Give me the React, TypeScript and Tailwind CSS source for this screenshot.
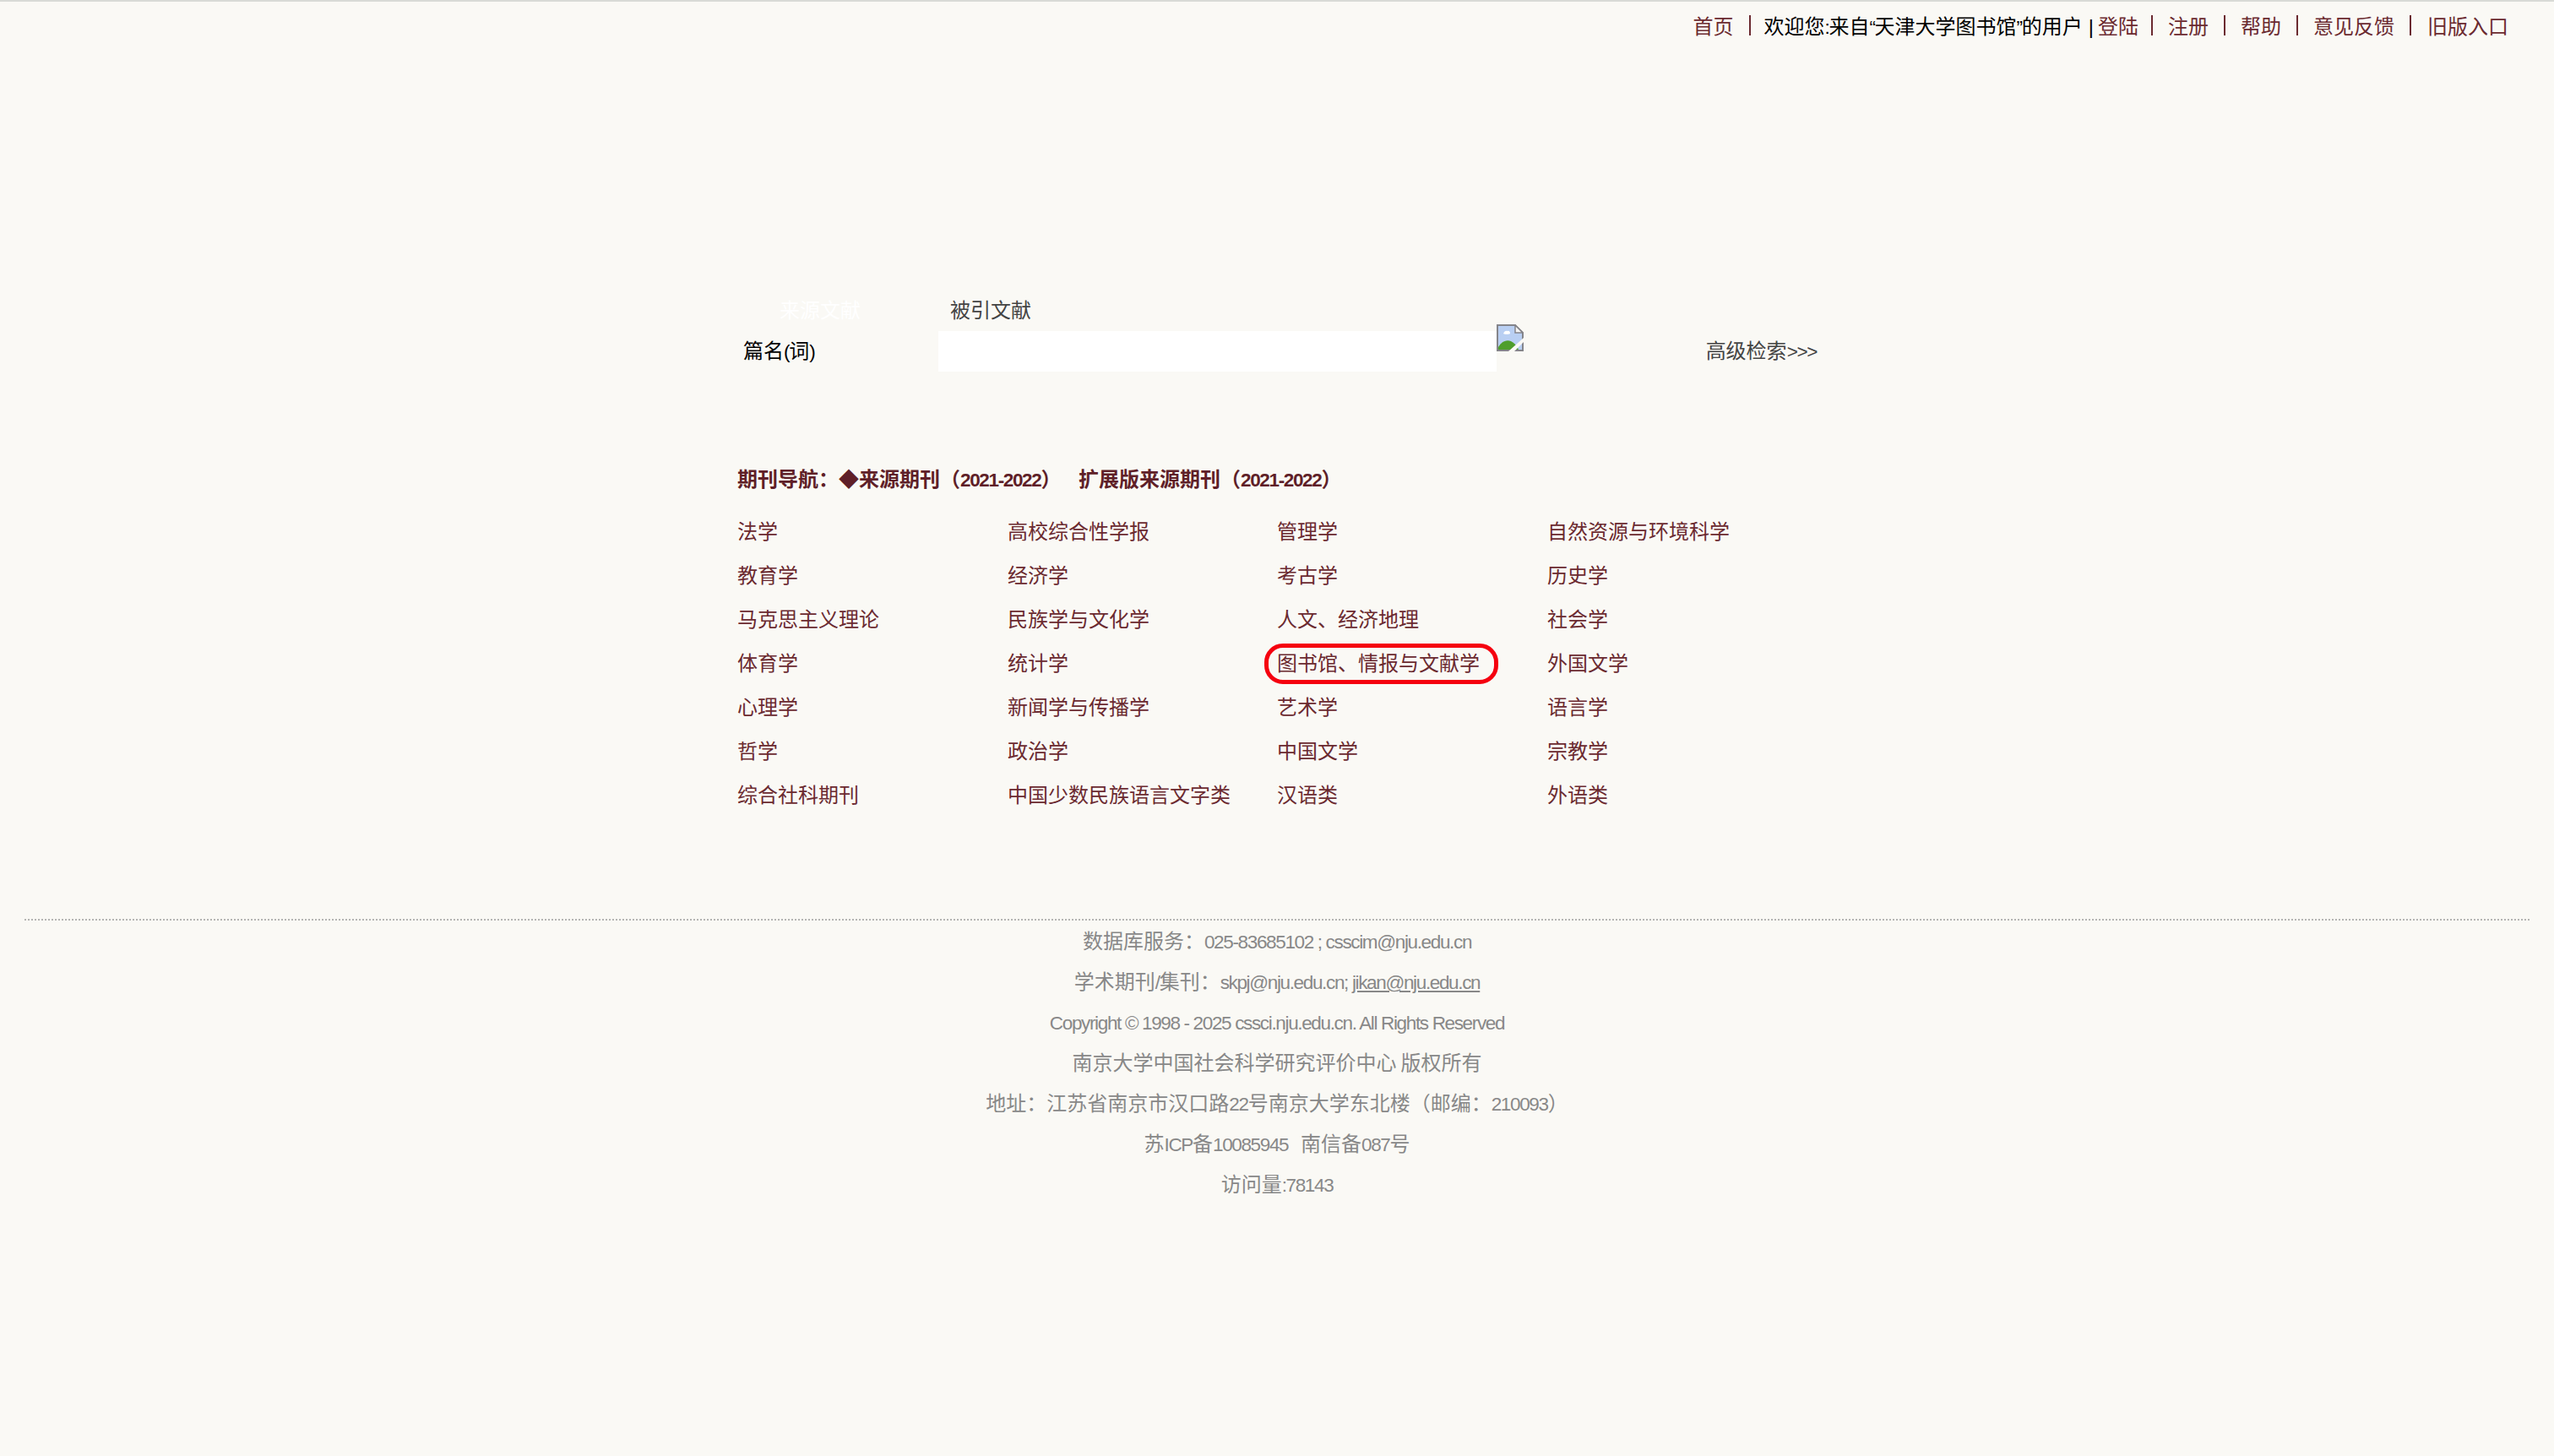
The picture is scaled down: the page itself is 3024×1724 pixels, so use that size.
import type { ReactNode } from "react";

const subjects = [
  ["法学", "高校综合性学报", "管理学", "自然资源与环境科学"],
  ["教育学", "经济学", "考古学", "历史学"],
  ["马克思主义理论", "民族学与文化学", "人文、经济地理", "社会学"],
  ["体育学", "统计学", "图书馆、情报与文献学", "外国文学"],
  ["心理学", "新闻学与传播学", "艺术学", "语言学"],
  ["哲学", "政治学", "中国文学", "宗教学"],
  ["综合社科期刊", "中国少数民族语言文字类", "汉语类", "外语类"],
];

const topLinks = ["注册", "帮助", "意见反馈"];

// latin runs are set tighter than the cjk around them
function L({ children }: { children: ReactNode }) {
  return <span className="text-[22.5px] leading-none tracking-[-1.35px]">{children}</span>;
}

function BrokenImage() {
  return (
    <svg width="32" height="32" viewBox="0 0 32 32" className="shrink-0 self-start">
      <path d="M1 1H22L31 10V31H1Z" fill="#b9cff2" stroke="#85858a" strokeWidth="2" />
      <path d="M22 1V10H31Z" fill="#f4f4f4" stroke="#85858a" strokeWidth="1.5" />
      <path d="M2 30V27C6 20 12 18 17 20C21 22 24 25 26 30Z" fill="#4f9e2c" />
      <path d="M8 11C9 8 11 7 13 8C15 7 16 9 16 11C16 12 8 12 8 11Z" fill="#fff" />
      <path d="M14 32L32 16V21L21 32Z" fill="#faf9f5" />
    </svg>
  );
}

export default function App() {
  return (
    <div className="min-h-[1724px] bg-[#faf9f5] border-t-2 border-[#d8dad6] text-[24px] leading-[32px] font-['Liberation_Sans','Noto_Sans_CJK_SC',sans-serif]">
      <header className="flex justify-end items-center h-[60px] pr-[54px] text-[#6b2a30]">
        <a className="pr-[18px] border-r-2 border-[#6b2a30] leading-[24px] -translate-y-[2px]"><span className="inline-block translate-y-[2px]">首页</span></a>
        <span className="pl-[16px] pr-[5px] text-black">欢迎您<L>:</L>来自<L>“</L>天津大学图书馆<L>”</L>的用户<span className="ml-[7px]">|</span></span>
        <a className="pr-[15px] border-r-2 border-[#6b2a30] leading-[24px] -translate-y-[2px]"><span className="inline-block translate-y-[2px]">登陆</span></a>
        {topLinks.map(link => (
          <a key={link} className="px-[18px] border-r-2 border-[#6b2a30] leading-[24px] -translate-y-[2px]"><span className="inline-block translate-y-[2px]">{link}</span></a>
        ))}
        <a className="pl-[19px]">旧版入口</a>
      </header>

      <main className="w-[1278px] mx-auto">
        <div className="flex mt-[290px] h-[32px] text-[#444]">
          <span className="ml-[50px] w-[202px] text-white">来源文献</span>
          <span>被引文献</span>
        </div>
        <div className="flex h-[48px] mt-[8px]">
          <label className="w-[238px] pl-[7px] self-center text-black">篇名<L>(</L>词<L>)</L></label>
          <div className="w-[661px] bg-white" />
          <div className="-mt-[8px]"><BrokenImage /></div>
          <a className="ml-auto self-center text-[#444]">高级检索<L>&gt;&gt;&gt;</L></a>
        </div>

        <div className="mt-[112px] font-bold text-[#5f1f28] flex">
          <span className="w-[404px]">期刊导航：◆来源期刊（<L>2021-2022</L>）</span>
          <span>扩展版来源期刊（<L>2021-2022</L>）</span>
        </div>

        <div className="mt-[20px] grid grid-cols-[320px_319px_320px_1fr] auto-rows-[52px] items-center text-[#6b2a30]">
          {subjects.flat().map(name => (
            <a key={name} className="relative w-fit">
              {name}
              {name === "图书馆、情报与文献学" && (
                <span className="absolute -left-[15px] -right-[22px] -top-[8px] -bottom-[8px] rounded-[22px] border-[5px] border-[#f5000f]" />
              )}
            </a>
          ))}
        </div>
      </main>

      <footer className="mt-[120px] mx-[29px] border-t-2 border-dotted border-[#b5b5b2] text-center text-[#888]">
        <div className="leading-[48px] pt-[1px]">
          <p>数据库服务：<L>025-83685102 ; csscim@nju.edu.cn</L></p>
          <p>学术期刊<L>/</L>集刊：<L>skpj@nju.edu.cn; <a className="underline">jikan@nju.edu.cn</a></L></p>
          <p><L>Copyright © 1998 - 2025 cssci.nju.edu.cn. All Rights Reserved</L></p>
          <p>南京大学中国社会科学研究评价中心<L> </L>版权所有</p>
          <p>地址：江苏省南京市汉口路<L>22</L>号南京大学东北楼（邮编：<L>210093</L>）</p>
          <p>苏<L>ICP</L>备<L>10085945&nbsp;&nbsp;&nbsp;</L>南信备<L>087</L>号</p>
          <p>访问量<L>:78143</L></p>
        </div>
      </footer>
    </div>
  );
}
